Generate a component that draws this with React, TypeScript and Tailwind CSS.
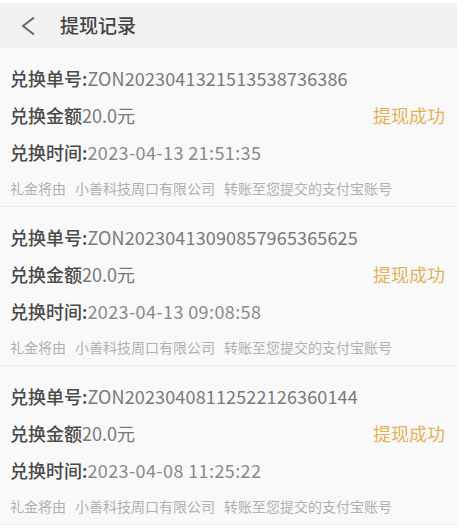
const records = [
  { id: "ZON2023041321513538736386", time: "2023-04-13 21:51:35" },
  { id: "ZON2023041309085796536562" + "5", time: "2023-04-13 09:08:58" },
  { id: "ZON2023040811252212636014" + "4", time: "2023-04-08 11:25:22" },
];

const font = { fontFamily: '"Noto Sans CJK SC", "Noto Sans", sans-serif' };

function RecordCard({ id, time }: { id: string; time: string }) {
  return (
    <div className="border-b border-[#efefef] bg-[#f9f9f9] pl-[10px] pr-[12px] pt-[12px] pb-[1px]">
      <div className="flex h-[37px] items-center text-[18px]">
        <span className="font-medium text-[#4a4a4a]">兑换单号:</span>
        <span className="tracking-[0.15px] text-[#7a7a7a]">{id}</span>
      </div>
      <div className="flex h-[37px] items-center justify-between text-[18px]">
        <div>
          <span className="font-medium text-[#4a4a4a]">兑换金额</span>
          <span className="text-[#7a7a7a]">20.0元</span>
        </div>
        <span className="text-[#e3b158]">提现成功</span>
      </div>
      <div className="flex h-[37px] items-center text-[18px]">
        <span className="font-medium text-[#4a4a4a]">兑换时间:</span>
        <span className="tracking-[0.4px] text-[#8a8a8a]">{time}</span>
      </div>
      <div className="flex h-[34px] items-center gap-[9px] text-[14px] text-[#b0b0b0]">
        <span>礼金将由</span>
        <span>小善科技周口有限公司</span>
        <span>转账至您提交的支付宝账号</span>
      </div>
    </div>
  );
}

export default function App() {
  return (
    <div className="min-h-[530px] w-[468px] bg-white pt-[3px]" style={font}>
      <div className="w-[457px]">
        <div className="flex h-[45px] items-center bg-[#f1f1f1]">
          <svg width="16" height="20" viewBox="0 0 16 20" className="ml-[20px]">
            <path d="M14 1.5 L3 10 L14 18.5" fill="none" stroke="#666" strokeWidth="2" />
          </svg>
          <span className="ml-[24px] text-[19px] font-medium text-[#444]">提现记录</span>
        </div>
        {records.map((r) => (
          <RecordCard key={r.id} id={r.id} time={r.time} />
        ))}
      </div>
    </div>
  );
}
